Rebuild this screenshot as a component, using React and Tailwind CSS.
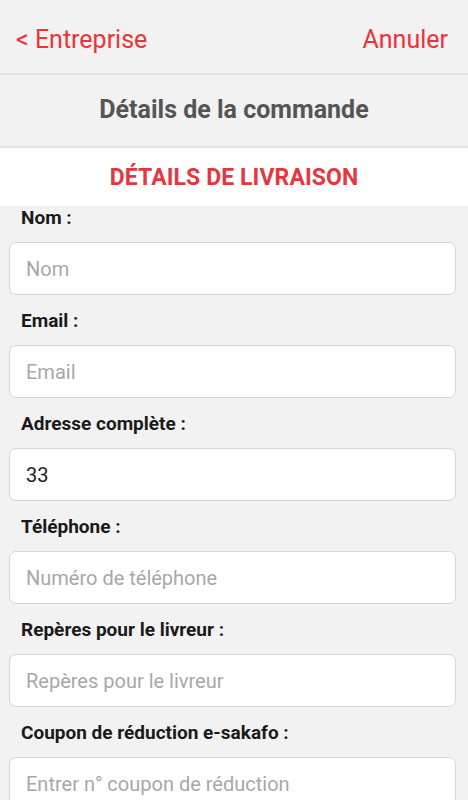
import React from "react";

const fields = [
  { label: "Nom :", placeholder: "Nom" },
  { label: "Email :", placeholder: "Email" },
  { label: "Adresse complète :", value: "33" },
  { label: "Téléphone :", placeholder: "Numéro de téléphone" },
  { label: "Repères pour le livreur :", placeholder: "Repères pour le livreur" },
  { label: "Coupon de réduction e-sakafo :", placeholder: "Entrer n° coupon de réduction" },
];

export default function App() {
  return (
    <div
      className="w-[468px] h-[800px] overflow-hidden bg-[#f2f2f2]"
      style={{ fontFamily: "Roboto, 'Noto Sans', sans-serif" }}
    >
      <div className="h-[75px] flex items-center justify-between pl-4 pr-5 pt-[6px] border-b-2 border-[#e4e4e4]">
        <span className="text-[25px] text-[#ee3338] leading-none">&lt; Entreprise</span>
        <span className="text-[25px] text-[#ee3338] leading-none">Annuler</span>
      </div>
      <div className="h-[73px] flex items-center justify-center pb-[2px] border-b-2 border-[#e4e4e4]">
        <span className="text-[25px] font-bold text-[#555555] leading-none">Détails de la commande</span>
      </div>
      <div className="h-[58px] bg-white flex items-center justify-center">
        <span className="text-[23px] font-bold text-[#e5383e] leading-none tracking-[0.1px]">DÉTAILS DE LIVRAISON</span>
      </div>
      <div className="px-[9px] pr-[12px]">
        {fields.map((f, i) => (
          <div key={i} className={i === 0 ? "" : "mt-[14px]"}>
            <div className="h-[36px] pl-3 pt-[1px] text-[19px] leading-[22px] font-bold text-[#1a1a1a]">{f.label}</div>
            <div className="h-[53px] bg-white border border-[#d6d6d6] rounded-[7px] flex items-center pl-4">
              {f.value ? (
                <span className="text-[20px] text-[#222222]">{f.value}</span>
              ) : (
                <span className="text-[20px] text-[#a8a8a8]">{f.placeholder}</span>
              )}
            </div>
          </div>
        ))}
      </div>
    </div>
  );
}
